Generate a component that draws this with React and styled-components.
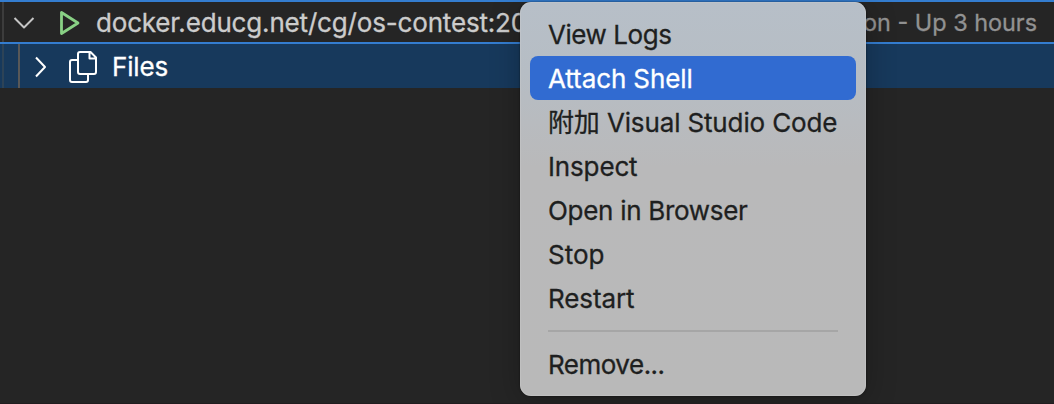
import React from 'react';
import styled, { createGlobalStyle } from 'styled-components';

const GlobalStyle = createGlobalStyle`
  * { box-sizing: border-box; }
  body { margin: 0; background: #252525; overflow: hidden; }
`;

const Panel = styled.main`
  position: relative;
  width: 1054px;
  height: 404px;
  overflow: hidden;
  background: #252525;
  border-bottom: 1px solid #211d1f;
  font: 26px/44px Inter, "Noto Sans CJK SC", sans-serif;
  -webkit-text-stroke: 0.3px currentColor;
`;

const ContainerRow = styled.div`
  display: flex;
  align-items: center;
  height: 44px;
  padding: 1px 17px 0 13px;
  border: solid #347dd0;
  border-width: 2px 0;
  box-shadow: inset 2px 0 #252525, inset 4px 0 #3c3c3c;
  white-space: pre;
`;

const FilesRow = styled.div`
  display: flex;
  align-items: center;
  height: 44px;
  padding: 2px 0 0 12px;
  color: #fff;
  background: linear-gradient(#585858, #585858) 18px 0 / 2px 100% no-repeat,
    linear-gradient(#2d4357, #2d4357) 2px 0 / 2px 100% no-repeat, #17395c;
`;

const Icon = styled.svg`
  flex: none;
  width: ${(p) => p.$w}px;
  height: ${(p) => p.$h}px;
  margin-right: ${(p) => p.$gap}px;
  margin-left: ${(p) => p.$left || 0}px;
  fill: none;
  stroke: ${(p) => p.$color || '#fff'};
  stroke-width: ${(p) => p.$stroke || 2};
  stroke-linejoin: round;
`;

const Label = styled.span`
  color: ${(p) => p.$color || 'inherit'};
  letter-spacing: ${(p) => p.$spacing || 0}px;
  line-height: 38px;
`;

const Status = styled(Label)`
  margin-left: auto;
  font-size: 23.4px;
`;

const Menu = styled.nav`
  position: absolute;
  left: 520px;
  top: 2px;
  width: 346px;
  height: 394px;
  padding: 10px;
  border-radius: 11px;
  background: linear-gradient(#b7bfc8 0, #b6bdc4 70px, #b8bbbf 120px, #b9b9ba 165px, #b9b9b9 100%);
  box-shadow: inset 0 0 0 1px rgba(205, 205, 205, 0.35), 0 0 2px rgba(0, 0, 0, 0.6), 0 5px 30px rgba(0, 0, 0, 0.25);
`;

const MenuItem = styled.div`
  height: 44px;
  padding: 1px 18px 0;
  border-radius: 8px;
  color: ${(p) => (p.$active ? '#fff' : '#1e1f20')};
  background: ${(p) => (p.$active ? '#316bd1' : 'transparent')};
  letter-spacing: ${(p) => p.$spacing || 0}px;
  white-space: nowrap;
`;

const Separator = styled.hr`
  height: 2px;
  margin: 10px 18px;
  border: 0;
  background: #a6a6a6;
`;

const items = [
  { text: 'View Logs', spacing: -0.45 },
  { text: 'Attach Shell', active: true, spacing: -0.1 },
  { text: '附加 Visual Studio Code', spacing: -0.14 },
  { text: 'Inspect', spacing: -0.15 },
  { text: 'Open in Browser', spacing: -0.3 },
  { text: 'Stop' },
  { text: 'Restart', spacing: -0.1 },
];

export default function App() {
  return (
    <>
      <GlobalStyle />
      <Panel>
        <ContainerRow>
          <Icon $w={22} $h={14} $gap={24} $color="#c5c5c5" viewBox="0 0 22 14">
            <path d="M1.500 2 11 11.500l9.500-9.500" />
          </Icon>
          <Icon $w={22} $h={26} $gap={15} $color="#89d185" $stroke={2.8} viewBox="0 0 22 26">
            <path d="M2.500 2.500v21L19 13z" />
          </Icon>
          <Label $color="#cccccc" $spacing={-0.17}>docker.educg.net/cg/os-contest:20</Label>
          <Status $color="#929292">on - Up 3 hours</Status>
        </ContainerRow>
        <FilesRow>
          <Icon $w={14} $h={22} $gap={20} $left={22} viewBox="0 0 14 22">
            <path d="m2 1.500 9 9.500-9 9.500" />
          </Icon>
          <Icon $w={30} $h={34} $gap={14} viewBox="0 0 30 34">
            <path d="M12 2h10.500l5.500 5.500V22q0 2-2 2H12q-2 0-2-2V4q0-2 2-2Z M21.500 2v6.500H28 M10 10H4q-2 0-2 2v18q0 2 2 2h14q2 0 2-2v-6" />
          </Icon>
          <Label $spacing={-0.15}>Files</Label>
        </FilesRow>
        <Menu>
          {items.map((item) => (
            <MenuItem key={item.text} $active={item.active} $spacing={item.spacing}>
              {item.text}
            </MenuItem>
          ))}
          <Separator />
          <MenuItem $spacing={-0.5}>Remove...</MenuItem>
        </Menu>
      </Panel>
    </>
  );
}
